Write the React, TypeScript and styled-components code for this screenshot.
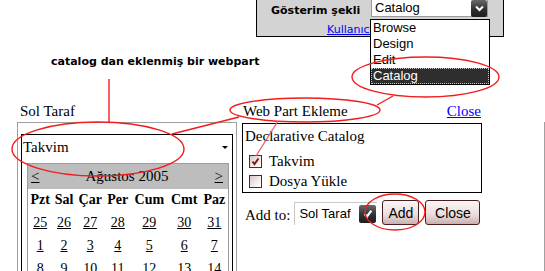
import React from 'react';
import styled, { createGlobalStyle } from 'styled-components';

const serif = `'Liberation Serif', 'Times New Roman', serif`;
const sans = `'Liberation Sans', Arial, sans-serif`;
const verdana = `'DejaVu Sans', Verdana, sans-serif`;

const GlobalStyle = createGlobalStyle`
  html, body {
    margin: 0;
    padding: 0;
    background: #fff;
  }
`;

const Page = styled.div`
  position: relative;
  width: 545px;
  height: 271px;
  overflow: hidden;
  background: #fff;
  font-family: ${serif};
  font-size: 15px;
  color: #000;
`;

/* ---- top: display mode panel ---- */

const TopArea = styled.div`
  height: 40px;
  padding-left: 256px;
`;

const ModePanel = styled.div`
  box-sizing: border-box;
  width: 248px;
  height: 37px;
  background: #d3d3d3;
  border: 1px solid #000;
  border-top: none;
`;

const ModeRow = styled.div`
  display: flex;
  align-items: flex-start;
  height: 19px;
  padding-left: 14px;
`;

const ModeLabel = styled.span`
  width: 100px;
  padding-top: 2px;
  font: bold 11px/18px ${verdana};
`;

const Select = styled.div<{ $w: number; $h: number }>`
  box-sizing: border-box;
  display: flex;
  align-items: center;
  justify-content: space-between;
  width: ${(p) => p.$w}px;
  height: ${(p) => p.$h}px;
  background: #fff;
  padding-left: 3px;
  font: 13px/16px ${sans};
`;

const ModeSelect = styled(Select)`
  border: 1px solid #9a9a9a;
  border-top: none;
`;

const ArrowBox = styled.span<{ $w: number; $h: number }>`
  display: flex;
  align-items: center;
  justify-content: center;
  width: ${(p) => p.$w}px;
  height: ${(p) => p.$h}px;
  border-radius: 2px;
  background: linear-gradient(#6a6a6a, #303030 55%, #1e1e1e);
`;

const UserLink = styled.a`
  display: block;
  width: 43px;
  margin: 4px 0 0 70px;
  font: 11px/14px ${verdana};
  color: #0000ff;
  text-decoration: underline;
  white-space: nowrap;
  overflow: hidden;
`;

const DropList = styled.ul`
  position: absolute;
  left: 370px;
  top: 19px;
  box-sizing: border-box;
  width: 120px;
  height: 66px;
  margin: 0;
  padding: 0;
  list-style: none;
  background: #fff;
  border: 1px solid #000;
  font: 13px/16px ${sans};
`;

const DropItem = styled.li<{ $active?: boolean }>`
  height: 16px;
  padding-left: 2px;
  background: ${(p) => (p.$active ? '#2e2e2e' : '#fff')};
  color: ${(p) => (p.$active ? '#fff' : '#000')};
  outline: ${(p) => (p.$active ? '1px dotted #c8c8c8' : 'none')};
  outline-offset: -1px;
`;

/* ---- annotation text ---- */

const NoteRow = styled.div`
  box-sizing: border-box;
  height: 60px;
  padding: 15px 0 0 51px;
  font: bold 11px/14px ${verdana};
`;

/* ---- zones ---- */

const Zones = styled.div`
  display: flex;
  padding-left: 17px;
  height: 171px;
`;

const LeftZone = styled.div`
  display: flex;
  flex-direction: column;
  width: 220px;
`;

const ZoneTitle = styled.div`
  display: flex;
  justify-content: space-between;
  height: 22px;
  padding: 0 1px 0 3px;
  line-height: 22px;
`;

const ZoneBody = styled.div`
  flex: 1;
  border: 1px solid #a0a0a0;
  border-bottom: none;
  padding: 11px 3px 0;
`;

const WebPart = styled.div`
  height: 100%;
  border: 1px solid #000;
  border-bottom: none;
`;

const PartTitle = styled.div`
  display: flex;
  align-items: center;
  justify-content: space-between;
  height: 24px;
  padding: 0 4px 0 1px;
  line-height: 24px;
`;

const MenuArrow = styled.span`
  width: 0;
  height: 0;
  border-left: 3px solid transparent;
  border-right: 3px solid transparent;
  border-top: 3px solid #000;
`;

const CalWrap = styled.div`
  margin: 4px 3px 0 5px;
`;

const CalTable = styled.table`
  width: 202px;
  border-collapse: collapse;
  border: 1px solid #9c9c9c;
  font: 14px ${serif};
`;

const CalHead = styled.td`
  height: 25px;
  padding: 0;
  background: #bdbdbd;
`;

const CalHeadInner = styled.div`
  display: flex;
  justify-content: space-between;
  padding: 0 5px 0 3px;
  font-size: 15px;
  line-height: 25px;
`;

const NavLink = styled.a`
  color: #000;
  text-decoration: underline;
`;

const DayName = styled.th`
  height: 22px;
  padding: 0;
  font-weight: bold;
  text-align: center;
`;

const DayCell = styled.td`
  height: 23px;
  padding: 0;
  text-align: center;
  text-decoration: underline;
`;

const RightZone = styled.div`
  flex: 1;
  display: flex;
  flex-direction: column;
`;

const RightTitle = styled(ZoneTitle)`
  box-sizing: border-box;
  width: 240px;
  margin-left: 5px;
  padding: 0 1px;
`;

const BlueLink = styled.a`
  color: #0000ff;
  text-decoration: underline;
`;

const RightBody = styled.div`
  flex: 1;
  border-right: 1px solid #a0a0a0;
  padding: 1px 0 0 5px;
`;

const CatalogBox = styled.div`
  box-sizing: border-box;
  width: 240px;
  border: 1px solid #000;
  padding: 1px 0 1px 2px;
`;

const CatalogTitle = styled.div`
  line-height: 22px;
  margin-bottom: 4px;
`;

const CheckRow = styled.label`
  display: flex;
  align-items: center;
  gap: 7px;
  height: 20px;
  padding-left: 4px;
`;

const CheckBox = styled.span`
  box-sizing: border-box;
  display: inline-flex;
  align-items: center;
  justify-content: center;
  width: 13px;
  height: 13px;
  border: 1px solid #6b1c1c;
  background: linear-gradient(135deg, #d6c6c6, #f4eeee 60%, #fff);
`;

const AddRow = styled.div`
  display: flex;
  align-items: center;
  height: 25px;
  margin-top: 7px;
  padding-left: 3px;
`;

const AddLabel = styled.span`
  padding-top: 6px;
  margin-right: 4px;
`;

const ZoneSelect = styled(Select)`
  border-top: 1px solid #c8c8c8;
  border-left: 1px solid #c8c8c8;
  padding-left: 4px;
  padding-right: 1px;
  margin-top: 2px;
  margin-right: 5px;
  font-size: 13px;
`;

const Btn = styled.button<{ $w: number }>`
  box-sizing: border-box;
  width: ${(p) => p.$w}px;
  height: 25px;
  margin-right: 6px;
  padding: 0;
  border: 1px solid #4a1e1e;
  border-radius: 3px;
  background: linear-gradient(#fbf5f5, #eadcdc 60%, #c9afaf);
  font: 14px ${sans};
  color: #000;
`;

const Overlay = styled.svg`
  position: absolute;
  left: 0;
  top: 0;
  pointer-events: none;
`;

const Chevron = () => (
  <svg width="9" height="7" viewBox="0 0 9 7">
    <polyline points="1,1.5 4.5,5 8,1.5" fill="none" stroke="#fff" strokeWidth="2" />
  </svg>
);

const Tick = ({ color, w = 9 }: { color: string; w?: number }) => (
  <svg width={w} height={w} viewBox="0 0 9 9">
    <polyline points="1.5,4.5 3.5,7 7.5,1.5" fill="none" stroke={color} strokeWidth="2" />
  </svg>
);

const dayNames = ['Pzt', 'Sal', 'Çar', 'Per', 'Cum', 'Cmt', 'Paz'];
const weeks = [
  [25, 26, 27, 28, 29, 30, 31],
  [1, 2, 3, 4, 5, 6, 7],
  [8, 9, 10, 11, 12, 13, 14],
];

const catalogItems = [
  { name: 'Takvim', checked: true },
  { name: 'Dosya Yükle', checked: false },
];

export default function App() {
  return (
    <Page>
      <GlobalStyle />
      <TopArea>
        <ModePanel>
          <ModeRow>
            <ModeLabel>Gösterim şekli</ModeLabel>
            <ModeSelect $w={117} $h={17}>
              Catalog
              <ArrowBox $w={16} $h={17}>
                <Chevron />
              </ArrowBox>
            </ModeSelect>
          </ModeRow>
          <UserLink>Kullanıcı Bilgileri</UserLink>
        </ModePanel>
      </TopArea>

      <NoteRow>catalog dan eklenmiş bir webpart</NoteRow>

      <Zones>
        <LeftZone>
          <ZoneTitle>Sol Taraf</ZoneTitle>
          <ZoneBody>
            <WebPart>
              <PartTitle>
                Takvim
                <MenuArrow />
              </PartTitle>
              <CalWrap>
                <CalTable>
                  <tbody>
                    <tr>
                      <CalHead colSpan={7}>
                        <CalHeadInner>
                          <NavLink>&lt;</NavLink>
                          <span>Ağustos 2005</span>
                          <NavLink>&gt;</NavLink>
                        </CalHeadInner>
                      </CalHead>
                    </tr>
                    <tr>
                      {dayNames.map((d) => (
                        <DayName key={d}>{d}</DayName>
                      ))}
                    </tr>
                    {weeks.map((w, i) => (
                      <tr key={i}>
                        {w.map((d) => (
                          <DayCell key={d}>{d}</DayCell>
                        ))}
                      </tr>
                    ))}
                  </tbody>
                </CalTable>
              </CalWrap>
            </WebPart>
          </ZoneBody>
        </LeftZone>

        <RightZone>
          <RightTitle>
            <span>Web Part Ekleme</span>
            <BlueLink>Close</BlueLink>
          </RightTitle>
          <RightBody>
            <CatalogBox>
              <CatalogTitle>Declarative Catalog</CatalogTitle>
              {catalogItems.map((it) => (
                <CheckRow key={it.name}>
                  <CheckBox>{it.checked && <Tick color="#8a1414" />}</CheckBox>
                  {it.name}
                </CheckRow>
              ))}
            </CatalogBox>
            <AddRow>
              <AddLabel>Add to:</AddLabel>
              <ZoneSelect $w={83} $h={23}>
                Sol Taraf
                <ArrowBox $w={17} $h={18}>
                  <Tick color="#fff" w={10} />
                </ArrowBox>
              </ZoneSelect>
              <Btn $w={37}>Add</Btn>
              <Btn $w={55}>Close</Btn>
            </AddRow>
          </RightBody>
        </RightZone>
      </Zones>

      <DropList>
        <DropItem>Browse</DropItem>
        <DropItem>Design</DropItem>
        <DropItem>Edit</DropItem>
        <DropItem $active>Catalog</DropItem>
      </DropList>

      <Overlay width="545" height="271">
        <g fill="none" stroke="#f21c1c" strokeWidth="1.4">
          <ellipse cx="425.5" cy="77" rx="73.5" ry="20" />
          <line x1="393" y1="96" x2="377" y2="105" />
          <ellipse cx="305" cy="110" rx="75" ry="12" />
          <line x1="109" y1="79" x2="109" y2="122" />
          <ellipse cx="98" cy="149" rx="86" ry="27" />
          <line x1="172" y1="134" x2="239" y2="117" />
          <line x1="278" y1="121" x2="256" y2="156" stroke="#f06070" />
          <ellipse cx="395" cy="212" rx="30" ry="18" />
        </g>
      </Overlay>
    </Page>
  );
}
